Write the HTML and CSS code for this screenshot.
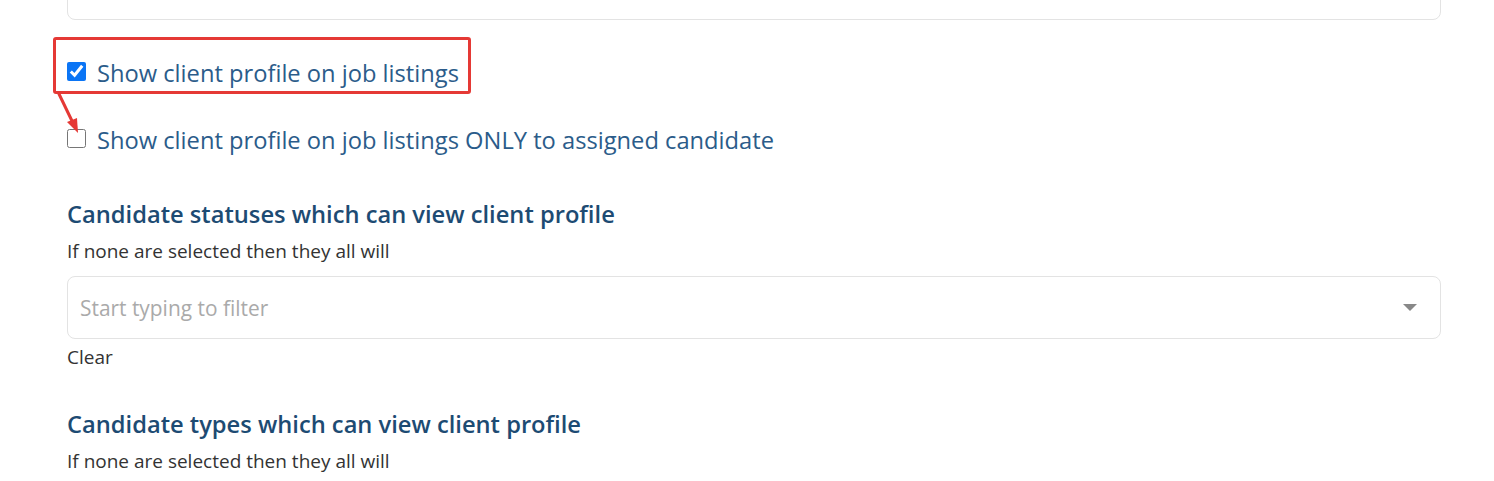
FILE: index.html
```html
<!DOCTYPE html>
<html lang="en">
<head>
  <meta charset="UTF-8" />
  <title>Client profile settings</title>
  <link rel="stylesheet" href="styles.css">
</head>
<body>
  <div class="container">
    <div class="field field-top"></div>

    <div class="highlight">
      <label class="check-row">
        <input type="checkbox" checked />
        <span>Show client profile on job listings</span>
      </label>
      <svg class="arrow" width="40" height="50" viewBox="0 0 40 50">
        <line x1="4" y1="1" x2="18" y2="30" stroke="#e53935" stroke-width="3" stroke-linecap="round" />
        <polygon points="23,40 12,29 22,25" fill="#e53935" />
      </svg>
    </div>

    <label class="check-row second">
      <input type="checkbox" />
      <span>Show client profile on job listings ONLY to assigned candidate</span>
    </label>

    <h2>Candidate statuses which can view client profile</h2>
    <p class="hint">If none are selected then they all will</p>
    <div class="field select">
      <span class="placeholder">Start typing to filter</span>
      <span class="caret"></span>
    </div>
    <a class="clear">Clear</a>

    <h2 class="types">Candidate types which can view client profile</h2>
    <p class="hint">If none are selected then they all will</p>
  </div>
</body>
</html>
```

FILE: styles.css
```css
body {
  margin: 0;
  background: #fff;
  font-family: 'Open Sans', sans-serif;
  overflow: hidden;
}
.container {
  width: 1374px;
  margin-left: 67px;
}
.field {
  border: 1px solid #e3e3e3;
  border-radius: 8px;
  box-sizing: border-box;
}
.field-top {
  height: 60px;
  margin-top: -40px;
}
.highlight {
  position: relative;
  display: inline-flex;
  margin: 17px 0 0 -14px;
  padding: 17px 9px 6px 11px;
  border: 3px solid #e53935;
  border-radius: 3px;
}
.arrow {
  position: absolute;
  left: -1px;
  top: 53px;
}
.check-row {
  display: flex;
  align-items: center;
  height: 28px;
  font-size: 23.7px;
  color: #2b5c8a;
  cursor: pointer;
}
.check-row span {
  padding-top: 4px;
}
.check-row input {
  width: 19px;
  height: 19px;
  margin: 0 11px 0 0;
  accent-color: #0b75f5;
}
.check-row.second {
  margin-top: 30px;
}
h2 {
  margin: 47px 0 0;
  font-size: 23.7px;
  font-weight: 600;
  line-height: 30px;
  color: #1d4b73;
}
.hint {
  margin: 10px 0 0;
  font-size: 19px;
  line-height: 24px;
  color: #333;
}
.select {
  display: flex;
  align-items: center;
  justify-content: space-between;
  height: 63px;
  margin-top: 13px;
  padding: 0 23px 0 12px;
}
.placeholder {
  font-size: 20.9px;
  color: #aaa;
}
.caret {
  width: 0;
  height: 0;
  border-left: 7px solid transparent;
  border-right: 7px solid transparent;
  border-top: 7px solid #888;
}
.clear {
  display: block;
  margin-top: 6px;
  font-size: 19px;
  line-height: 24px;
  color: #333;
}
h2.types {
  margin-top: 40px;
}
```
